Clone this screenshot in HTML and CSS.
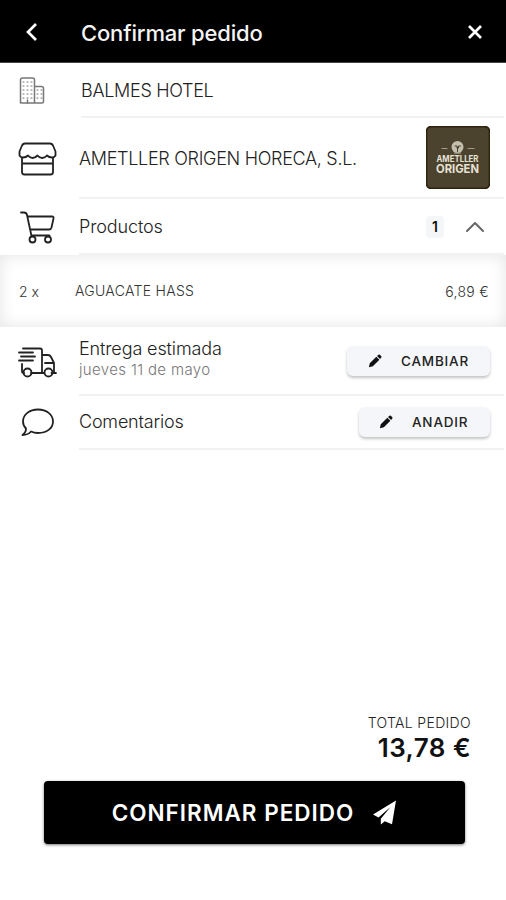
FILE: index.html
```html
<!DOCTYPE html>
<html lang="es">
<head>
<meta charset="utf-8">
<title>Confirmar pedido</title>
<link rel="stylesheet" href="styles.css">
</head>
<body>
<header class="topbar">
  <svg class="back" width="14" height="22" viewBox="0 0 14 22"><path d="M11 3 3 11l8 8"/></svg>
  <h1>Confirmar pedido</h1>
  <svg class="close" width="16" height="16" viewBox="0 0 16 16"><path d="m2 2 12 12M14 2 2 14"/></svg>
</header>
<main>
  <section class="row hotel">
    <div class="icon"><svg class="building" width="26" height="28" viewBox="0 0 26 28"><path d="M1.5 26V3q0-2 2-2h10q2 0 2 2v23M15.5 9.500h7q2 0 2 2V24.500q0 1.500-1.500 1.500H3q-1.500 0-1.500-1.500"/><path class="windows" d="M4 5h10M4 9h10M4 13h10M4 17h10M4 21h10M18 13h5M18 17h5M18 21h5"/><path d="M8.500 26v-3"/></svg></div>
    <div class="content"><span class="label name">BALMES HOTEL</span></div>
  </section>
  <section class="row supplier">
    <div class="icon"><svg width="39" height="34" viewBox="0 0 39 34"><path d="M7 1.500h25q2 0 3 2l2.500 6v4q-1 2-3.500 2-3 0-5-2-2 2.500-4.800 2.500T19.500 13.500Q17 16 14.500 16T10 13.500Q8 15.500 5 15.500q-2.500 0-3.500-2v-4l2.500-6q1-2 3-2ZM4 15.500V30q0 2.500 2.500 2.500h26Q35 32.500 35 30V15.500M4 21.500h31"/></svg></div>
    <div class="content"><span class="label company">AMETLLER ORIGEN HORECA, S.L.</span>
      <svg class="brand" width="64" height="63" viewBox="0 0 64 63"><rect x=".5" y=".5" width="63" height="62" rx="5"/><path class="dash" d="M16 22.500h5M42 22.500h6"/><circle cx="31.500" cy="21" r="6"/><path class="tree" d="M29 20h2v2M34.500 20h-2v2M31.500 21v5"/><path class="crown" d="M28.500 27h6"/><text x="31.500" y="36" textLength="42" lengthAdjust="spacingAndGlyphs" font-size="9">AMETLLER</text><text x="31.500" y="47" textLength="43" lengthAdjust="spacingAndGlyphs" font-size="12">ORIGEN</text></svg>
    </div>
  </section>
  <section class="row products">
    <div class="icon"><svg class="cart" width="36" height="33" viewBox="0 0 36 33"><path d="M1 1.500h3q2.500 0 3 2.500l4.500 21M8 5.500h24q2 0 1.500 2l-2 9q-.5 2-2.500 2H10M11.500 24.500h18"/><circle cx="12.500" cy="28.500" r="3"/><circle cx="28" cy="28.500" r="3"/></svg></div>
    <div class="content"><span class="label productos">Productos</span><span class="count">1</span>
      <svg class="chevron" width="20" height="12" viewBox="0 0 20 12"><path d="m2 10 8-8 8 8"/></svg></div>
  </section>
  <section class="items">
    <span class="qty">2 x</span><span class="product">AGUACATE HASS</span><span class="price">6,89 €</span>
  </section>
  <section class="row delivery">
    <div class="icon"><svg class="truck" width="39" height="31" viewBox="0 0 39 31"><path d="M5 1.500h17q2 0 2 2V26H13M1 5.500h14M3 9.500h14M1 13.500h14M4 17v7.500q0 1.500 2 1.500M24 8h6q2 0 3 2l3 6v10M24 26h2M33.500 26H38M27 16h9"/><circle cx="9.500" cy="25.500" r="4"/><circle cx="30.500" cy="25.500" r="4"/></svg></div>
    <div class="content"><div class="details"><span class="label entrega">Entrega estimada</span><span class="date">jueves 11 de mayo</span></div>
      <button class="edit change"><svg width="14" height="14" viewBox="0 0 16 16"><path d="m1 15 1-4.500L9.500 3 13 6.500 5.500 14ZM10.300 2.200 12 .8q.8-.7 1.500 0l1.700 1.700q.6.700 0 1.400l-1.400 1.800Z"/></svg><span>CAMBIAR</span></button></div>
  </section>
  <section class="row comments">
    <div class="icon"><svg class="bubble" width="34" height="29" viewBox="0 0 34 29"><path d="M17 1.500c8.500 0 15 5 15 12S25.500 25 17 25q-4-.1-7-1.500-3 3.500-8.500 3.500Q5 24.500 5 20.500 2 17.500 2 13.500c0-7 6.500-12 15-12Z"/></svg></div>
    <div class="content"><span class="label comentarios">Comentarios</span>
      <button class="edit add"><svg width="14" height="14" viewBox="0 0 16 16"><path d="m1 15 1-4.500L9.500 3 13 6.500 5.500 14ZM10.300 2.200 12 .8q.8-.7 1.500 0l1.700 1.700q.6.700 0 1.400l-1.400 1.800Z"/></svg><span>ANADIR</span></button></div>
  </section>
</main>
<footer>
  <div class="total"><span class="total-label">TOTAL PEDIDO</span><strong>13,78 €</strong></div>
  <button class="confirm"><span>CONFIRMAR PEDIDO</span><svg width="25" height="25" viewBox="0 0 25 25"><path d="M24 .5 1 14.500l5.500 3L18.500 7 8.800 18.800V24.500l4-3.300 7.200 3Z"/></svg></button>
</footer>
</body>
</html>
```
FILE: styles.css
```css
* { box-sizing: border-box; }
body { margin: 0; height: 900px; display: flex; flex-direction: column; background: #fff; color: #222; font-family: Inter, sans-serif; }
svg { display: block; flex: none; fill: none; stroke: #222; stroke-width: 1.8; stroke-linecap: round; stroke-linejoin: round; }
button { font: inherit; border: 0; padding: 0; display: flex; align-items: center; }
span, strong, h1 { white-space: nowrap; }
.topbar { height: 63px; padding: 1px 23px 0 25px; display: flex; align-items: center; background: #000; border-bottom: 1px solid #444; }
.topbar svg { stroke: #fff; stroke-width: 2.7; stroke-linecap: butt; stroke-linejoin: miter; }
.topbar h1 { margin: 3px 0 0 42px; color: #f4f4f4; font-size: 22px; font-weight: 500; line-height: 28px; letter-spacing: -.17px; }
.topbar .close { margin-left: auto; }
.row { display: flex; }
.icon { width: 79px; padding-left: 18px; display: flex; align-items: center; }
.content { flex: 1; margin-right: 2px; padding-right: 14px; display: flex; align-items: center; border-bottom: 2px solid #f2f2f2; }
.label { font-size: 18px; font-weight: 300; line-height: 24px; letter-spacing: -.12px; }
.hotel { height: 55px; }
.hotel .content { margin-left: 2px; }
.name { padding-top: 2px; letter-spacing: -.3px; }
.building { margin-left: 1px; stroke: #777; stroke-width: 1.5; }
.building .windows { stroke-width: 1.2; stroke-dasharray: 1 3; }
.supplier { height: 81px; }
.supplier .content { padding-right: 14px; }
.company { padding-top: 2px; letter-spacing: -.31px; }
.brand { margin-left: auto; stroke: none; }
.brand rect { fill: #4c432f; stroke: #30230e; }
.brand circle { fill: #c4bfae; }
.brand .dash { stroke: #a39c88; stroke-width: 1.2; }
.brand .tree, .brand .crown { stroke: #4c432f; stroke-width: 1; }
.brand .crown { stroke: #c4bfae; }
.brand text { fill: #e5e1d3; font-family: Inter, sans-serif; font-weight: 700; text-anchor: middle; }
.products { height: 56px; }
.products .content { padding-top: 1px; padding-right: 15px; }
.cart { margin-left: 2px; }
.count { margin-left: auto; width: 18px; height: 22px; border-radius: 4px; background: #f5f6f7; color: #111; font-size: 14px; font-weight: 600; line-height: 22px; text-align: center; }
.chevron { margin: 1px 4px 0 21px; stroke: #666; stroke-width: 2; }
.items { height: 72px; padding: 0 17px 0 19px; display: flex; align-items: center; color: #333; font-size: 14px; font-weight: 300; line-height: 20px; box-shadow: inset 0 0 16px #e4e4e4; }
.qty { width: 56px; padding-top: 1px; }
.product { letter-spacing: .3px; }
.price { margin-left: auto; padding-top: 1px; letter-spacing: .3px; }
.delivery { height: 69px; }
.truck { margin-top: 1px; }
.details { display: flex; flex-direction: column; padding-bottom: 4px; }
.details .label { line-height: 22px; }
.date { color: #777; font-size: 15px; font-weight: 300; line-height: 20px; letter-spacing: .35px; }
.edit { margin-left: auto; height: 30px; padding: 0 22px 0 21px; border-radius: 6px; background: #f4f6f9; color: #222; font-size: 13.5px; font-weight: 500; letter-spacing: .8px; box-shadow: 0 2px 3px #c4c4c4; }
.edit svg { fill: #111; stroke: none; margin-right: 19px; }
.change { width: 143px; }
.add { width: 131px; }
.add svg { margin-left: -1px; }
.comments { height: 54px; }
.comentarios { letter-spacing: -.2px; }
.bubble { margin-left: 3px; margin-top: -2px; }
footer { margin-top: auto; height: 187px; padding: 0 41px 0 43px; }
.total { display: flex; flex-direction: column; align-items: flex-end; margin-right: -6px; }
.total-label { font-size: 14px; font-weight: 300; line-height: 20px; letter-spacing: .35px; }
.total strong { color: #111; font-size: 26px; font-weight: 600; line-height: 30px; letter-spacing: .45px; }
.confirm { margin: 18px 0 0 1px; width: 421px; height: 63px; justify-content: center; gap: 18px; border-radius: 4px; background: #000; color: #fff; font-size: 22.5px; font-weight: 600; letter-spacing: 1px; box-shadow: 0 1px 3px #777; }
.confirm svg { fill: #fff; stroke: none; }
```
